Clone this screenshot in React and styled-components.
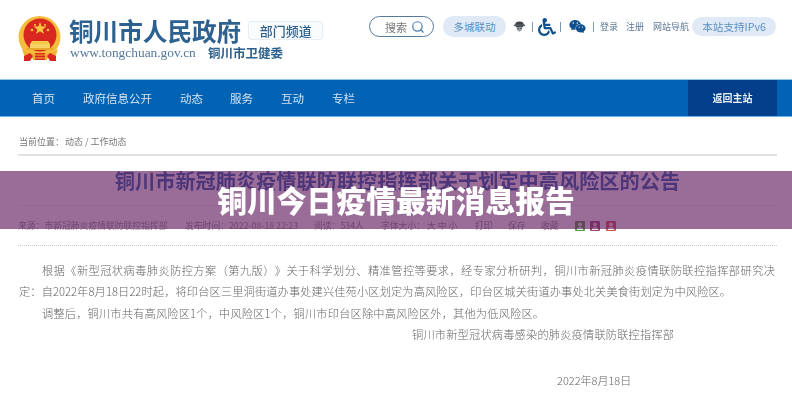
import React from 'react';
import styled, { createGlobalStyle } from 'styled-components';
import { Search } from 'lucide-react';
import { FaWheelchair, FaWeixin } from 'react-icons/fa';

const GlobalStyle = createGlobalStyle`
    html, body {
        margin: 0;
        padding: 0;
        background: #fff;
    }
`
const Page = styled.div`
    width: 792px;
    height: 400px;
    position: relative;
    overflow: hidden;
    background: #fff;
    font-family: "Noto Sans CJK SC", "Liberation Sans", sans-serif;
`
const Shot = styled.div`
    filter: blur(0.45px);
`
const Header = styled.header`
    height: 79px;
    box-sizing: border-box;
    padding: 16px 0 0 18px;
    display: flex;
    align-items: flex-start;
`
const Brand = styled.div`
    margin-left: 7px;
    width: 270px;
`
const BrandTop = styled.div`
    display: flex;
    align-items: center;
    height: 28px;
`
const SiteName = styled.div`
    font-weight: 700;
    font-size: 24.6px;
    line-height: 28px;
    color: #2c6190;
    white-space: nowrap;
`
const Channel = styled.div`
    margin-left: 7px;
    width: 75px;
    height: 19px;
    box-sizing: border-box;
    border: 1px solid #e6edf4;
    border-radius: 3px;
    background: #f9fbfd;
    color: #2c5f8e;
    font-size: 13px;
    font-weight: 500;
    line-height: 17px;
    text-align: center;
`
const BrandBottom = styled.div`
    display: flex;
    align-items: center;
    height: 17px;
`
const Url = styled.div`
    font-family: "Liberation Serif", serif;
    font-size: 13.4px;
    color: #55789b;
    width: 138px;
    margin-left: 1px;
    white-space: nowrap;
`
const Bureau = styled.div`
    font-size: 12.5px;
    font-weight: 700;
    color: #2a5f8e;
    white-space: nowrap;
`
const Tools = styled.div`
    margin-left: 30px;
    display: flex;
    align-items: center;
    height: 21px;
`
const SearchBox = styled.div`
    width: 65px;
    height: 21px;
    box-sizing: border-box;
    border: 1px solid #55799b;
    border-radius: 11px;
    display: flex;
    align-items: center;
    justify-content: flex-end;
    gap: 4px;
    padding-right: 8px;
    color: #777;
    font-size: 11px;
    margin-right: 9px;
`
const Pill = styled.div`
    height: ${props => props.$h}px;
    width: ${props => props.$w}px;
    margin-left: ${props => props.$gap || 0}px;
    border-radius: 10px;
    background: #e0eaf6;
    color: #5a8fc4;
    font-size: 10.6px;
    line-height: ${props => props.$h}px;
    text-align: center;
    white-space: nowrap;
    flex: none;
`
const IconSlot = styled.span`
    display: flex;
    width: ${props => props.$w}px;
    justify-content: center;
    color: #0f4f8e;
`
const Sep = styled.span`
    width: 1px;
    height: 10px;
    background: #7d9bb8;
    flex: none;
`
const SmallLink = styled.span`
    font-size: 9px;
    color: #5b7897;
    margin-left: ${props => props.$gap}px;
    white-space: nowrap;
`
const Nav = styled.nav`
    height: 38px;
    box-sizing: border-box;
    background: #0263b5;
    border-top: 1px solid #8cc4ea;
    border-bottom: 1px solid #6db2e6;
    display: flex;
    align-items: stretch;
    padding-left: 32px;
`
const NavItem = styled.a`
    font-size: 11.5px;
    color: #d3e4f4;
    line-height: 36px;
    margin-right: ${props => props.$gap}px;
    white-space: nowrap;
`
const BackLink = styled.a`
    width: 89px;
    background: #033f8b;
    color: #e6eef7;
    font-size: 10px;
    font-weight: 700;
    line-height: 36px;
    text-align: center;
    margin-left: auto;
    margin-right: 15px;
`
const Content = styled.main`
    padding: 0 15px 0 18px;
`
const Crumb = styled.div`
    height: 39px;
    box-sizing: border-box;
    border-bottom: 2px solid #dfe2e4;
    font-size: 9px;
    color: #777;
    line-height: 49px;
    padding-left: 1px;
`
const CrumbPath = styled.span`
    margin-left: 1px;
`
const ArticleTitle = styled.h1`
    margin: 0;
    height: 50px;
    box-sizing: border-box;
    border-bottom: 1px solid #f0f0f0;
    text-align: center;
    font-size: 20.2px;
    font-weight: 700;
    line-height: 50px;
    color: #1c5fa2;
    white-space: nowrap;
`
const Meta = styled.div`
    height: 40px;
    box-sizing: border-box;
    border-bottom: 1px dotted #ccc;
    display: flex;
    align-items: center;
    font-size: 8.8px;
    line-height: 16px;
    color: #8a8a8a;
    white-space: nowrap;
`
const MetaItem = styled.span`
    width: ${props => props.$w}px;
    flex: none;
`
const Share = styled.span`
    width: 10px;
    height: 10px;
    background: ${props => props.$bg};
    border-radius: 1px;
    margin-right: ${props => props.$gap}px;
    flex: none;
    display: flex;
    align-items: center;
    justify-content: center;
`
const Body = styled.div`
    margin-top: 13.5px;
    font-size: 11.2px;
    font-weight: 300;
    color: #666;
`
const Line = styled.p`
    margin: 0 0 0 ${props => props.$indent}px;
    width: ${props => props.$w}px;
    height: 21.6px;
    line-height: 21.6px;
    white-space: nowrap;
    text-align: justify;
    text-align-last: justify;
    text-justify: inter-character;
    text-spacing-trim: space-all;
`
const DateLine = styled.p`
    margin: 24px 0 0 539px;
    font-size: 11px;
    font-weight: 300;
    line-height: 20px;
    color: #666;
    white-space: nowrap;
`
const Banner = styled.div`
    position: absolute;
    left: 0;
    right: 0;
    top: 171px;
    height: 58px;
    background: rgba(101, 32, 98, 0.66);
    color: #fff;
    font-size: 29.8px;
    font-weight: 900;
    line-height: 56px;
    text-align: center;
    white-space: nowrap;
`

// 国徽
const Emblem = () => (
    <svg width="44" height="46" viewBox="0 0 44 46">
        <circle cx="21.5" cy="21" r="21" fill="#f4bd3c" />
        <circle cx="22" cy="19" r="16.5" fill="#d8281f" />
        <polygon points="22,6 23.6,10.6 28.4,10.6 24.6,13.5 26,18 22,15.3 18,18 19.4,13.5 15.6,10.6 20.4,10.6" fill="#f6c945" />
        <circle cx="14" cy="14" r="1.3" fill="#f6c945" />
        <circle cx="30" cy="14" r="1.3" fill="#f6c945" />
        <circle cx="17" cy="9" r="1" fill="#f6c945" />
        <circle cx="27" cy="9" r="1" fill="#f6c945" />
        <path d="M14 25h16l2 3H12z" fill="#f6c945" />
        <rect x="12" y="28" width="20" height="4" fill="#f6d365" />
        <rect x="9" y="32" width="26" height="2" fill="#e9a92d" />
        <path d="M4 33c5 4 11 5 18 5s13-1 18-5l-3 9-6-3-2 5h-14l-2-5-6 3z" fill="#f0b232" />
        <path d="M6 40l6-3 3 3-3 5H6zM38 40l-6-3-3 3 3 5h6z" fill="#d8281f" />
        <rect x="17" y="37" width="10" height="7" fill="#d8281f" />
        <path d="M16 39h12M16 42h12" stroke="#f0b232" strokeWidth="1" />
    </svg>
);

const RobotHead = () => (
    <svg width="13" height="13" viewBox="0 0 13 13">
        <ellipse cx="6.5" cy="4.6" rx="4.2" ry="3.2" fill="#3d4348" />
        <rect x="0.8" y="4.6" width="11.4" height="1.7" rx="0.8" fill="#555b60" />
        <path d="M3.4 7.2h6.2l-1.2 3.4-2 1.2-2-1.2z" fill="#9b9ea1" />
        <circle cx="5" cy="8.4" r="0.7" fill="#333" />
        <circle cx="8" cy="8.4" r="0.7" fill="#333" />
    </svg>
);

const ShareGlyph = ({ color }) => (
    <svg width="8" height="8" viewBox="0 0 8 8">
        <circle cx="4" cy="2.6" r="2" fill={color} />
        <path d="M0.8 8c0-2.2 1.4-3.2 3.2-3.2S7.2 5.8 7.2 8z" fill={color} />
    </svg>
);

const navItems = [
    { label: '首页', gap: 28 },
    { label: '政府信息公开', gap: 28 },
    { label: '动态', gap: 27 },
    { label: '服务', gap: 28 },
    { label: '互动', gap: 28 },
    { label: '专栏', gap: 0 },
];

// full width punctuation, as in the source page
const COLON = '\uFF1A';
const COMMA = '\uFF0C';
const OPEN = '\uFF08';
const CLOSE = '\uFF09';

const metaItems = [
    { label: `来源${COLON}市新冠肺炎疫情联防联控指挥部`, w: 167 },
    { label: `发布时间${COLON}2022-08-18 22:23`, w: 129 },
    { label: `阅读${COLON}534人`, w: 67 },
    { label: `字体大小${COLON} 大 中 小`, w: 94 },
    { label: '打印', w: 33 },
    { label: '保存', w: 33 },
    { label: '收藏', w: 34 },
];

const paragraphs = [
    { text: `根据《新型冠状病毒肺炎防控方案${OPEN}第九版${CLOSE}》关于科学划分、精准管控等要求${COMMA}经专家分析研判${COMMA}铜川市新冠肺炎疫情联防联控指挥部研究决`, indent: 24, w: 733 },
    { text: `定${COLON}自2022年8月18日22时起${COMMA}将印台区三里洞街道办事处建兴佳苑小区划定为高风险区${COMMA}印台区城关街道办事处北关美食街划定为中风险区。`, indent: 1, w: 712 },
    { text: `调整后${COMMA}铜川市共有高风险区1个${COMMA}中风险区1个${COMMA}铜川市印台区除中高风险区外${COMMA}其他为低风险区。`, indent: 24, w: 502 },
    { text: '铜川市新型冠状病毒感染的肺炎疫情联防联控指挥部', indent: 394, w: 262 },
];

const App = () => {
    return(
        <Page>
            <GlobalStyle />
            <Shot>
                <Header>
                    <Emblem />
                    <Brand>
                        <BrandTop>
                            <SiteName>铜川市人民政府</SiteName>
                            <Channel>部门频道</Channel>
                        </BrandTop>
                        <BrandBottom>
                            <Url>www.tongchuan.gov.cn</Url>
                            <Bureau>铜川市卫健委</Bureau>
                        </BrandBottom>
                    </Brand>
                    <Tools>
                        <SearchBox>
                            搜索
                            <Search size={14} color="#3f7db5" strokeWidth={2} />
                        </SearchBox>
                        <Pill $w={63} $h={21}>多城联动</Pill>
                        <IconSlot $w={26}><RobotHead /></IconSlot>
                        <Sep />
                        <IconSlot $w={27}><FaWheelchair size={18} /></IconSlot>
                        <Sep />
                        <IconSlot $w={32}><FaWeixin size={17} /></IconSlot>
                        <Sep />
                        <SmallLink $gap={6}>登录</SmallLink>
                        <SmallLink $gap={8}>注册</SmallLink>
                        <SmallLink $gap={9}>网站导航</SmallLink>
                        <Pill $w={84} $h={19} $gap={3}>本站支持IPv6</Pill>
                    </Tools>
                </Header>
                <Nav>
                    {navItems.map(item => (
                        <NavItem key={item.label} $gap={item.gap}>{item.label}</NavItem>
                    ))}
                    <BackLink>返回主站</BackLink>
                </Nav>
                <Content>
                    <Crumb>
                        当前位置{COLON}
                        <CrumbPath>动态 / 工作动态</CrumbPath>
                    </Crumb>
                    <ArticleTitle>铜川市新冠肺炎疫情联防联控指挥部关于划定中高风险区的公告</ArticleTitle>
                    <Meta>
                        {metaItems.map(item => (
                            <MetaItem key={item.label} $w={item.w}>{item.label}</MetaItem>
                        ))}
                        <Share $bg="#5a9a3c" $gap={5}><ShareGlyph color="#dfe" /></Share>
                        <Share $bg="#9a4a78" $gap={6}><ShareGlyph color="#fdd" /></Share>
                        <Share $bg="#d8534a" $gap={0}><ShareGlyph color="#fee" /></Share>
                    </Meta>
                    <Body>
                        {paragraphs.map(item => (
                            <Line key={item.indent} $indent={item.indent} $w={item.w}>{item.text}</Line>
                        ))}
                    </Body>
                    <DateLine>2022年8月18日</DateLine>
                </Content>
            </Shot>
            <Banner>铜川今日疫情最新消息报告</Banner>
        </Page>
    )
}

export default App;
